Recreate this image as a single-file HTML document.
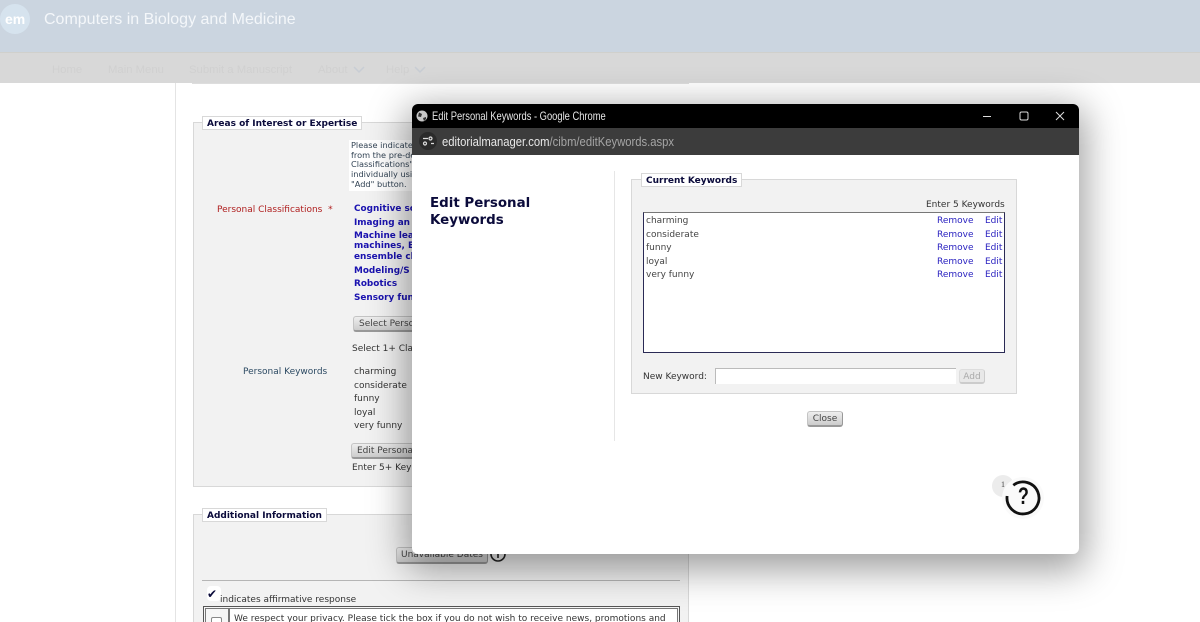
<!DOCTYPE html>
<html><head><meta charset="utf-8"><style>
html,body{margin:0;padding:0;width:1200px;height:622px;overflow:hidden;background:#fff}
body{position:relative;font-family:"DejaVu Sans",sans-serif;font-size:9px;color:#333}
.a,.a *{white-space:nowrap}
.a{position:absolute;line-height:12px}
.b{position:absolute;box-sizing:border-box}
.bl{color:#1a12b0;font-weight:bold;font-size:8.9px}
.lg{background:#fff;border:1px solid #d8d8d8;font-weight:bold;color:#0b0b3b;font-size:9px;padding:0 4px;height:14px;line-height:14px;box-sizing:border-box}
.btn{position:absolute;box-sizing:border-box;background:linear-gradient(#eee,#ccc);border:1px solid #c4c4c4;border-right-color:#999;border-bottom:2px solid #999;border-radius:3px;text-align:center;color:#444;line-height:14px}
.lnk{color:#2a22c0}
.nv{font:11.3px/14px 'Liberation Sans',sans-serif;color:#d0d0d0}
</style></head><body>
<div class="b" style="left:0;top:0;width:1200px;height:52px;background:#cbd5e0"></div>
<div class="b" style="left:0;top:52px;width:1200px;height:31px;background:#d8d8d8;border-top:1px solid #d0d0cc"></div>
<div class="b" style="left:0;top:4px;width:30px;height:30px;border-radius:50%;background:#d6e3ee"></div>
<div class="a" style="left:5px;top:12px;font:bold 14px/14px 'Liberation Sans',sans-serif;color:#fff">em</div>
<div class="a" style="left:44px;top:10px;font:16px/20px 'Liberation Sans',sans-serif;color:#f4f7fa">Computers in Biology and Medicine</div>
<div class="a nv" style="left:52px;top:63px">Home</div>
<div class="a nv" style="left:108px;top:63px">Main Menu</div>
<div class="a nv" style="left:189px;top:63px">Submit a Manuscript</div>
<div class="a nv" style="left:318px;top:63px">About</div>
<div class="a nv" style="left:386px;top:63px">Help</div>
<svg class="b" style="left:350px;top:64px" width="80" height="12" fill="none" stroke="#c8cdd4" stroke-width="1.5"><path d="M4 3l5 5 5-5M65 3l5 5 5-5"/></svg>

<div class="b" style="left:175px;top:83px;width:1px;height:539px;background:#e4e4e4"></div>
<div class="b" style="left:192px;top:83px;width:497px;height:1px;background:#ddd"></div>

<div class="b" style="left:193px;top:122px;width:496px;height:365px;background:#f2f2f2;border:1px solid #d8d8d8"></div>
<div class="a lg" style="left:202px;top:116px">Areas of Interest or Expertise</div>
<div class="b" style="left:349px;top:140px;width:70px;height:51px;background:#fff"></div>
<div class="a" style="left:351px;top:141px;font-size:8.2px;line-height:9.7px;color:#345">Please indicate<br>from the pre-de<br>Classifications"<br>individually usi<br>"Add" button.</div>
<div class="a" style="left:217px;top:204px;color:#b02020">Personal Classifications &nbsp;<span>*</span></div>
<div class="a bl" style="left:354px;top:203px">Cognitive sc</div>
<div class="a bl" style="left:354px;top:217px">Imaging an</div>
<div class="a bl" style="left:354px;top:231px;line-height:10.4px;margin-top:0">Machine lea<br>machines, E<br>ensemble cl</div>
<div class="a bl" style="left:354px;top:265px">Modeling/S</div>
<div class="a bl" style="left:354px;top:278px">Robotics</div>
<div class="a bl" style="left:354px;top:292px">Sensory fun</div>
<div class="btn" style="left:353px;top:316px;width:70px;height:16px;text-align:left;padding-left:5px;overflow:hidden">Select Perso</div>
<div class="a" style="left:352px;top:343px">Select 1+ Cla</div>
<div class="a" style="left:243px;top:366px;color:#2c4a63">Personal Keywords</div>
<div class="a" style="left:354px;top:366px;line-height:13.6px">charming<br>considerate<br>funny<br>loyal<br>very funny</div>
<div class="btn" style="left:351px;top:443px;width:70px;height:16px;text-align:left;padding-left:5px;overflow:hidden">Edit Persona</div>
<div class="a" style="left:352px;top:462px">Enter 5+ Key</div>

<div class="b" style="left:193px;top:514px;width:496px;height:108px;background:#f2f2f2;border:1px solid #d8d8d8;border-bottom:0"></div>
<div class="a lg" style="left:202px;top:508px">Additional Information</div>
<div class="btn" style="left:396px;top:547px;width:92px;height:17px">Unavailable Dates</div>
<svg class="b" style="left:489px;top:545px" width="18" height="18" fill="none" stroke="#222" stroke-width="1.6"><circle cx="9" cy="9" r="7"/><path d="M9 6v7"/></svg>
<div class="b" style="left:202px;top:580px;width:478px;height:1px;background:#b5b5b5"></div>
<div class="b" style="left:207px;top:586px;width:14px;height:15px;background:#fff;border-radius:4px"></div>
<div class="a" style="left:207px;top:588px;font-size:12px;color:#0b0b3b">✔</div>
<div class="a" style="left:220px;top:594px">indicates affirmative response</div>
<div class="b" style="left:203px;top:606px;width:477px;height:16px;border:1px solid #555;border-bottom:0;background:#f6f6f6"></div>
<div class="b" style="left:205px;top:608px;width:24px;height:14px;border:1px solid #777;border-bottom:0"></div>
<div class="b" style="left:229px;top:608px;width:449px;height:14px;border:1px solid #777;border-bottom:0;background:#fff"></div>
<div class="b" style="left:211px;top:617px;width:11px;height:8px;border:1px solid #888;border-radius:2px;background:#fff"></div>
<div class="a" style="left:234px;top:613px">We respect your privacy. Please tick the box if you do not wish to receive news, promotions and</div>

<div class="b" style="left:412px;top:104px;width:667px;height:450px;background:#fff;border-radius:6px;box-shadow:0 10px 38px 6px rgba(0,0,0,.38);overflow:hidden">
  <div class="b" style="left:0;top:0;width:667px;height:24px;background:#000"></div>
  <div class="b" style="left:0;top:24px;width:667px;height:27px;background:#3c3c3c"></div>
  <svg class="b" style="left:3px;top:5px" width="14" height="14"><circle cx="7" cy="7" r="5.5" fill="#c8c8c8"/><path d="M4 3.5l3 1.5-1 3-3-.5zM8 9l3-1 0 2-2 2z" fill="#333"/></svg>
  <div class="a" style="left:20px;top:5px;font:12px/14px 'Liberation Sans',sans-serif;color:#e6e6e6;transform:scaleX(.78);transform-origin:0 0">Edit Personal Keywords - Google Chrome</div>
  <svg class="b" style="left:560px;top:0" width="100" height="24" fill="none" stroke="#ddd" stroke-width="1"><path d="M11 12.500h8"/><rect x="48" y="8" width="8" height="8" rx="1.5"/><path d="M84 8l8 8M92 8l-8 8"/></svg>
  <div class="b" style="left:7px;top:28px;width:18px;height:18px;border-radius:50%;background:#2b2b2b"></div>
  <svg class="b" style="left:9px;top:31px" width="14" height="12" fill="none" stroke="#ddd" stroke-width="1.2"><path d="M2 3.500h5M10 8.500h3"/><circle cx="9.500" cy="3.500" r="1.500"/><circle cx="4" cy="8.500" r="1.500"/></svg>
  <div class="a" style="left:30px;top:30px;font:13.2px/15px 'Liberation Sans',sans-serif;color:#e8e8e8;transform:scaleX(.853);transform-origin:0 0">editorialmanager.com<span style="color:#a5a5a5">/cibm/editKeywords.aspx</span></div>

  <div class="a" style="left:18px;top:91px;font-weight:bold;font-size:13.4px;line-height:17px;color:#0b0b3b">Edit Personal<br>Keywords</div>
  <div class="b" style="left:202px;top:67px;width:1px;height:270px;background:#e6e6e6"></div>

  <div class="b" style="left:219px;top:75px;width:386px;height:215px;background:#f2f2f2;border:1px solid #d8d8d8"></div>
  <div class="a lg" style="left:229px;top:69px">Current Keywords</div>
  <div class="a" style="left:514px;top:95px">Enter 5 Keywords</div>
  <div class="b" style="left:231px;top:108px;width:362px;height:141px;background:#fff;border:1px solid #2a2a55;border-top-color:#777"></div>
  <div class="a" style="left:234px;top:111px;line-height:13.6px;color:#444">charming<br>considerate<br>funny<br>loyal<br>very funny</div>
  <div class="a lnk" style="left:525px;top:111px;line-height:13.6px">Remove<br>Remove<br>Remove<br>Remove<br>Remove</div>
  <div class="a lnk" style="left:573px;top:111px;line-height:13.6px">Edit<br>Edit<br>Edit<br>Edit<br>Edit</div>
  <div class="a" style="left:231px;top:267px;color:#333">New Keyword:</div>
  <div class="b" style="left:303px;top:264px;width:241px;height:16px;background:#fff;border:1px solid #bbb;border-bottom:0;border-right:0"></div>
  <div class="btn" style="left:547px;top:265px;width:26px;height:15px;color:#aaa;background:#e8e8e8;border-color:#ddd;border-bottom-color:#ccc;border-right-color:#ccc">Add</div>
  <div class="btn" style="left:395px;top:307px;width:36px;height:16px">Close</div>

  <div class="b" style="left:580px;top:371px;width:22px;height:22px;border-radius:50%;background:#ececec"></div>
  <div class="a" style="left:589px;top:376px;font:8px/10px 'Liberation Serif',serif;color:#444">1</div>
  <div class="b" style="left:590px;top:373px;width:42px;height:42px;border-radius:50%;background:#fafafa"></div>
  <svg class="b" style="left:591px;top:375px" width="40" height="38" fill="none" stroke="#111" stroke-width="2.8"><path d="M10.300 6.200A16 16 0 1 1 4.100 17"/></svg>
  <div class="a" style="left:604px;top:381px;font:bold 24px/24px 'Liberation Sans',sans-serif;color:#111;transform:scaleX(.75);transform-origin:50% 50%">?</div>
</div>
</body></html>
